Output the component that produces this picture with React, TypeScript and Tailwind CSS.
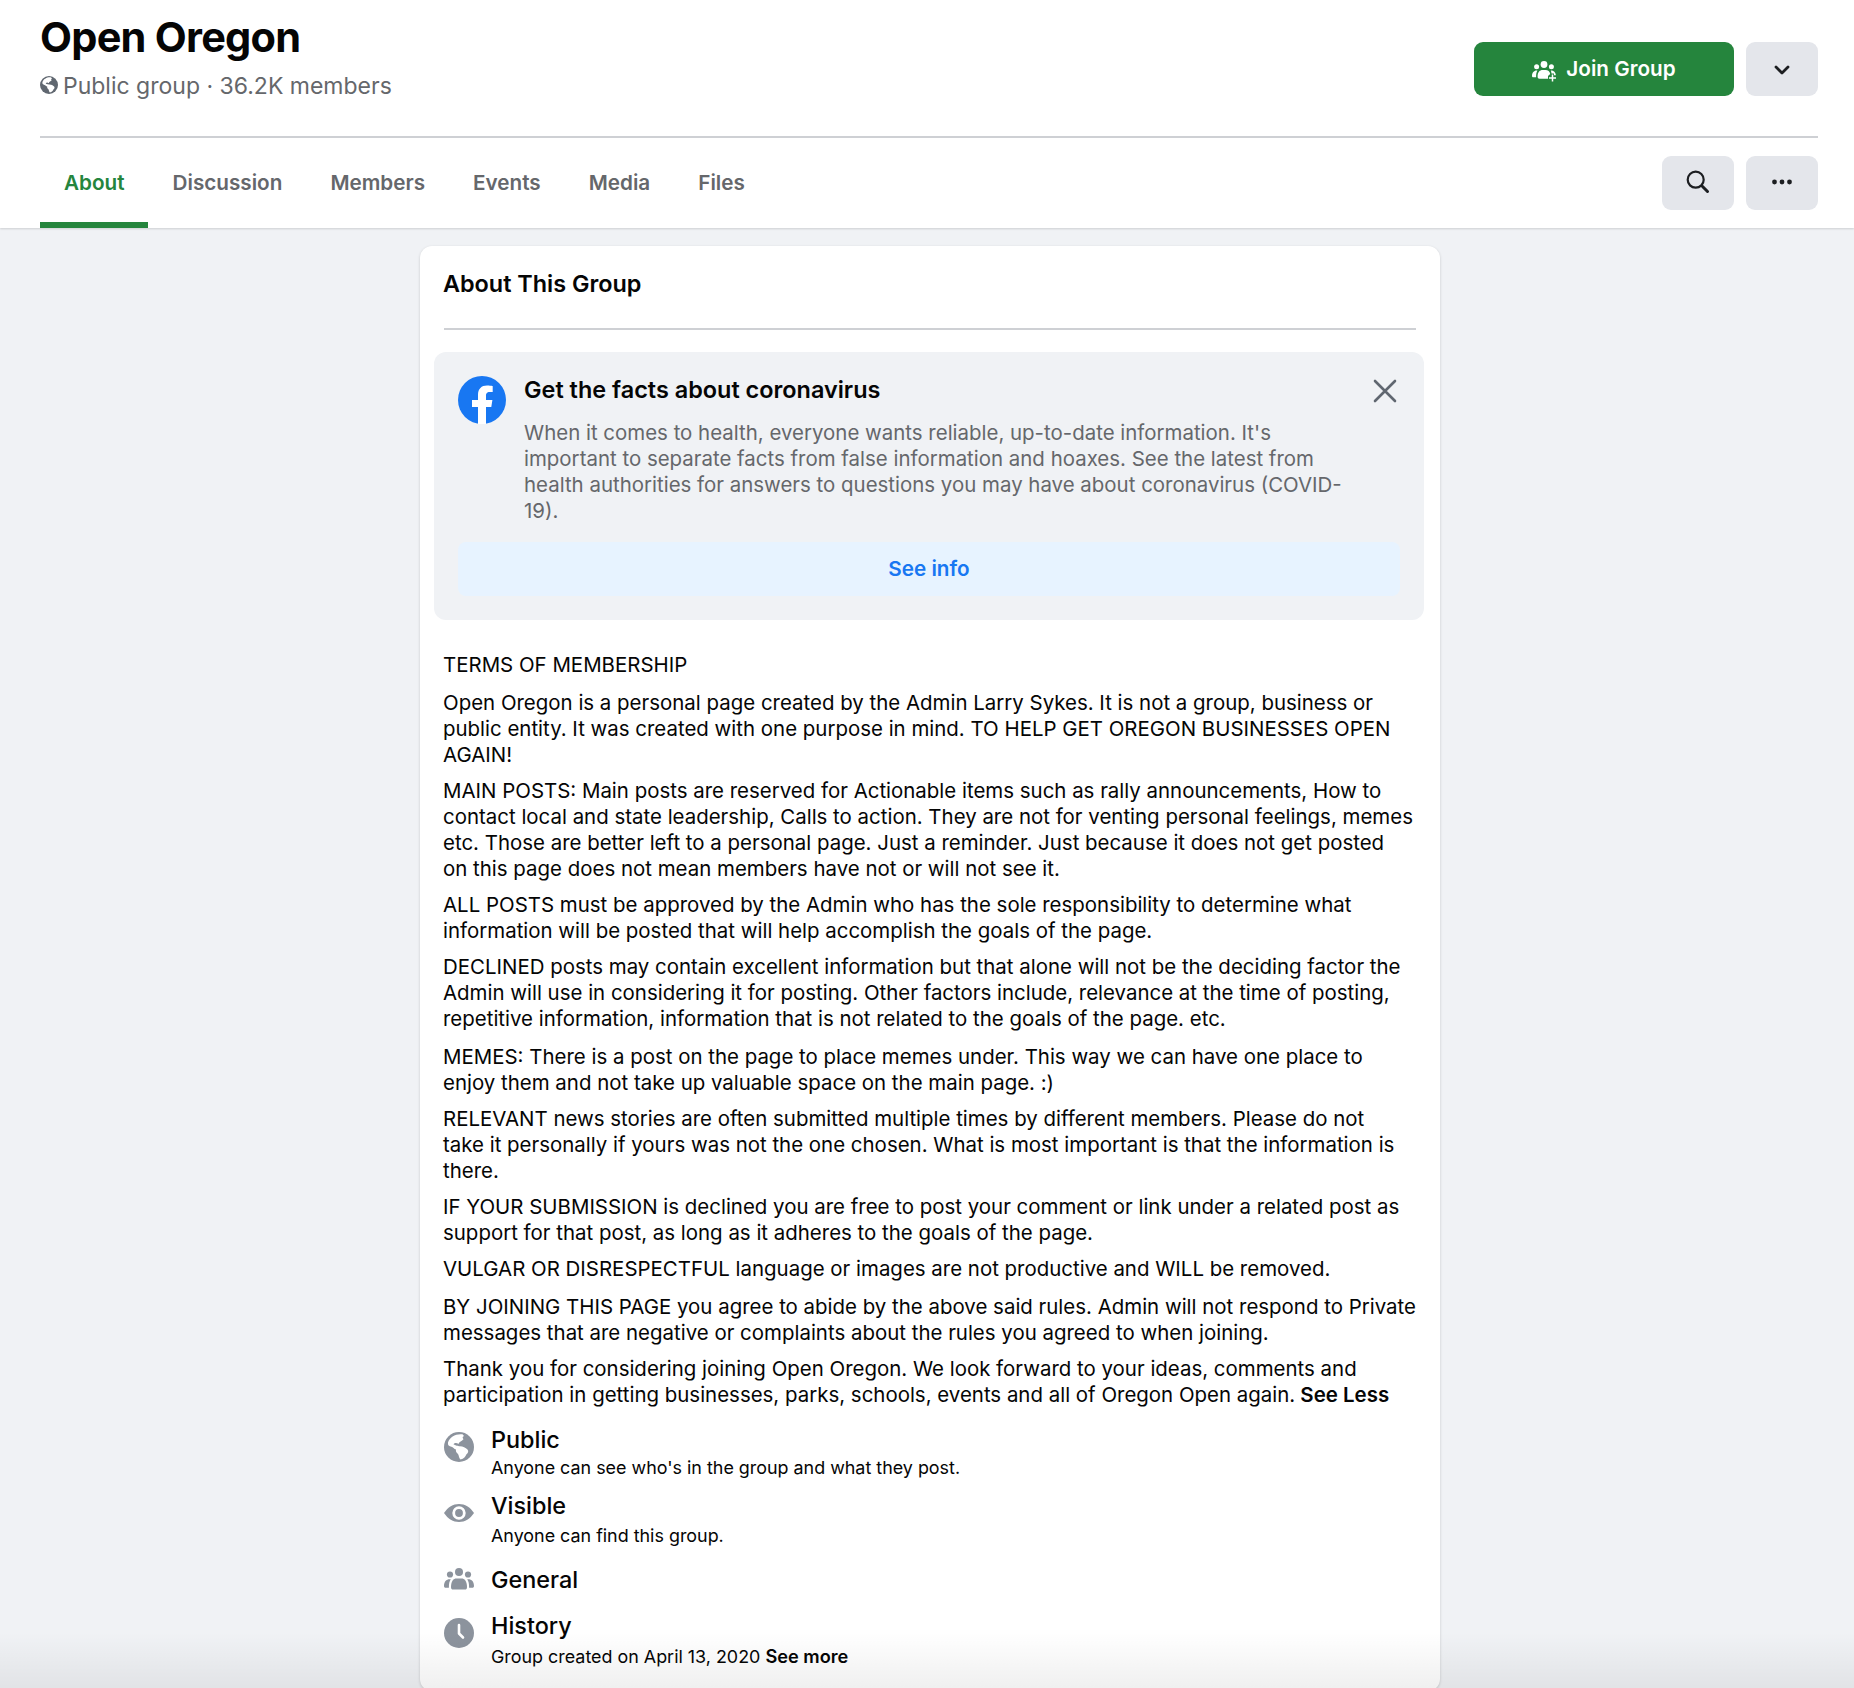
import React from "react";

const tabs = ["About", "Discussion", "Members", "Events", "Media", "Files"];

const terms = [
  { gap: "mt-0", lines: ["TERMS OF MEMBERSHIP"] },
  {
    gap: "mt-3",
    lines: [
      "Open Oregon is a personal page created by the Admin Larry Sykes. It is not a group, business or",
      "public entity. It was created with one purpose in mind. TO HELP GET OREGON BUSINESSES OPEN",
      "AGAIN!",
    ],
  },
  {
    gap: "mt-2.5",
    lines: [
      "MAIN POSTS: Main posts are reserved for Actionable items such as rally announcements, How to",
      "contact local and state leadership, Calls to action. They are not for venting personal feelings, memes",
      "etc. Those are better left to a personal page. Just a reminder. Just because it does not get posted",
      "on this page does not mean members have not or will not see it.",
    ],
  },
  {
    gap: "mt-2.5",
    lines: [
      "ALL POSTS must be approved by the Admin who has the sole responsibility to determine what",
      "information will be posted that will help accomplish the goals of the page.",
    ],
  },
  {
    gap: "mt-2.5",
    lines: [
      "DECLINED posts may contain excellent information but that alone will not be the deciding factor the",
      "Admin will use in considering it for posting. Other factors include, relevance at the time of posting,",
      "repetitive information, information that is not related to the goals of the page. etc.",
    ],
  },
  {
    gap: "mt-3",
    lines: [
      "MEMES: There is a post on the page to place memes under. This way we can have one place to",
      "enjoy them and not take up valuable space on the main page. :)",
    ],
  },
  {
    gap: "mt-2.5",
    lines: [
      "RELEVANT news stories are often submitted multiple times by different members. Please do not",
      "take it personally if yours was not the one chosen. What is most important is that the information is",
      "there.",
    ],
  },
  {
    gap: "mt-2.5",
    lines: [
      "IF YOUR SUBMISSION is declined you are free to post your comment or link under a related post as",
      "support for that post, as long as it adheres to the goals of the page.",
    ],
  },
  {
    gap: "mt-2.5",
    lines: ["VULGAR OR DISRESPECTFUL language or images are not productive and WILL be removed."],
  },
  {
    gap: "mt-3",
    lines: [
      "BY JOINING THIS PAGE you agree to abide by the above said rules. Admin will not respond to Private",
      "messages that are negative or complaints about the rules you agreed to when joining.",
    ],
  },
  {
    gap: "mt-2.5",
    lines: [
      "Thank you for considering joining Open Oregon. We look forward to your ideas, comments and",
      "participation in getting businesses, parks, schools, events and all of Oregon Open again.",
    ],
  },
];

function Globe({ className }: { className: string }) {
  return (
    <svg viewBox="0 0 30 30" className={className}>
      <circle cx="15" cy="15" r="15" fill="currentColor" />
      <path
        fill="#fff"
        d="M18.500 2.300 C12 1.500 5.500 5 4 10.500 C3.500 13 5 14.500 7.500 14.800 C9 15.300 10 17 12 17.500 C11.500 19 12.500 21 14 22 C15 23.500 14.800 25.800 16.500 27.500 C20 27 21.500 24.500 22.300 22.500 C24.300 21 24.800 19 23.500 17.500 C21.500 16 19 14.300 16 14.300 C14.500 14.300 14 13.800 13 13.800 C11.500 13.500 10.500 12.800 9.500 12.300 C10.500 10.500 13 10.500 14.500 12 C15 9.500 18 9 19.500 7.200 C18.500 6 18 5 20 4 Z"
      />
    </svg>
  );
}

function People({ className }: { className: string }) {
  return (
    <svg viewBox="0 0 30 22" className={className} fill="currentColor">
      <circle cx="15" cy="4" r="4" />
      <circle cx="6" cy="6.500" r="3.100" />
      <circle cx="24" cy="6.500" r="3.100" />
      <path d="M7 19 C7 13 9.500 10.500 12.500 10.500 H17.500 C20.500 10.500 23 13 23 19 C23 21 22.200 21.500 21 21.500 H9 C7.800 21.500 7 21 7 19 Z" />
      <path d="M6.800 11.300 C2.500 10.800 0 13.500 0 18 C0 19.200 .6 19.800 1.800 19.800 H4.900 C4.900 16 5.300 13.300 6.800 11.300 Z" />
      <path d="M23.200 11.300 C27.500 10.800 30 13.500 30 18 C30 19.200 29.400 19.800 28.200 19.800 H25.100 C25.100 16 24.700 13.300 23.200 11.300 Z" />
    </svg>
  );
}

function PeoplePlus() {
  return (
    <svg viewBox="0 0 24 21" className="mt-1 h-[21px] w-6" fill="#fff">
      <circle cx="12" cy="3.500" r="3.400" />
      <circle cx="4.600" cy="5.800" r="2.500" />
      <circle cx="19.400" cy="5.800" r="2.500" />
      <path d="M5.600 15.500 C5.600 11 8 9 10.500 9 H13.500 C16 9 17.800 10.300 18.200 13 L16 15 V17.700 H7.500 C6.200 17.700 5.600 17 5.600 15.500 Z" />
      <path d="M5 9.600 C2 9.400 0 11.800 0 15 C0 16 .5 16.300 1.400 16.300 H4.100 C4.100 13.500 4.300 11.500 5.400 9.600 Z" />
      <path d="M18.800 9.600 C21.500 9.400 23.600 11.500 23.900 14.300 H22 V12.600 H19.500 C19.400 11.500 19.200 10.700 18.800 9.600 Z" />
      <path d="M20.500 13.500 V20.500 M17 17 H24" stroke="#fff" strokeWidth="1.500" />
    </svg>
  );
}

function InfoRow({
  icon,
  title,
  className,
  children,
}: {
  icon: React.ReactNode;
  title: string;
  className: string;
  children?: React.ReactNode;
}) {
  return (
    <div className={className}>
      <div className="w-[30px] shrink-0">{icon}</div>
      <div className="whitespace-nowrap">
        <h3 className="text-[23.4px] leading-[30px] font-medium">{title}</h3>
        {children}
      </div>
    </div>
  );
}

function Header() {
  return (
    <header className="relative h-[228px] bg-white pr-9 pl-10 shadow-[0_1px_2px_rgba(0,0,0,0.15)]">
      <div className="flex h-[138px] justify-between border-b-2 border-[#ced0d4]">
        <div className="pt-[13px] whitespace-nowrap">
          <h1 className="text-[41.5px] leading-[48px] font-bold tracking-[-0.75px]">Open Oregon</h1>
          <div className="mt-[9px] flex items-center gap-[5px] text-[#65676b]">
            <Globe className="-mt-0.5 size-[18px] text-[#606770]" />
            <span className="text-[23px] leading-8">Public group · 36.2K members</span>
          </div>
        </div>
        <div className="flex gap-3 pt-[42px]">
          <button className="flex h-[54px] w-[260px] items-center justify-center gap-2.5 rounded-[9px] bg-[#25853d] text-white">
            <PeoplePlus />
            <span className="text-[20.7px] font-semibold">Join Group</span>
          </button>
          <button className="flex h-[54px] w-[72px] items-center justify-center rounded-[9px] bg-[#e4e6eb]">
            <svg viewBox="0 0 16 10" className="mt-px h-2.5 w-4" fill="none" stroke="#1c1e21" strokeWidth="2.800" strokeLinecap="round" strokeLinejoin="round">
              <path d="M2 2 L8 8 L14 2" />
            </svg>
          </button>
        </div>
      </div>
      <div className="flex h-[90px] justify-between">
        <nav className="flex text-[20.7px] font-semibold text-[#65676b]">
          {tabs.map((tab, i) => (
            <a
              key={tab}
              className={
                i === 0
                  ? "mr-px flex h-[90px] items-center rounded-t-[2px] border-b-[6px] border-[#25853d] pt-[5px] pr-[23px] pl-6 text-[#25853d]"
                  : "flex h-[90px] items-center border-b-[6px] border-transparent px-6 pt-[5px]"
              }
            >
              {tab}
            </a>
          ))}
        </nav>
        <div className="flex gap-3 pt-[18px]">
          <button className="flex h-[54px] w-[72px] items-center justify-center rounded-[9px] bg-[#e4e6eb] pb-0.5">
            <svg viewBox="0 0 24 24" className="size-6" fill="none" stroke="#1c1e21" strokeLinecap="round">
              <circle cx="9.700" cy="9.700" r="8" strokeWidth="2.200" />
              <path d="M16.300 16.300 L21.500 21.500" strokeWidth="3" />
            </svg>
          </button>
          <button className="flex h-[54px] w-[72px] items-center justify-center rounded-[9px] bg-[#e4e6eb] pb-0.5">
            <svg viewBox="0 0 20 6" className="h-1.5 w-5" fill="#1c1e21">
              <circle cx="2.500" cy="3" r="2.400" />
              <circle cx="10" cy="3" r="2.400" />
              <circle cx="17.500" cy="3" r="2.400" />
            </svg>
          </button>
        </div>
      </div>
    </header>
  );
}

function CovidNotice() {
  return (
    <div className="mt-[22px] -mr-2 -ml-2.5 h-[268px] rounded-xl bg-[#f0f2f5] px-6 pt-6">
      <div className="flex">
        <svg viewBox="0 0 48 48" className="size-12 shrink-0">
          <circle cx="24" cy="24" r="24" fill="#1877f2" />
          <path fill="#fff" d="M20 48 V30.900 H14 V24 H20 V18.800 C20 12.800 23.500 9.500 29 9.500 C31.500 9.500 34.700 10 34.700 10 V16 H31.700 C28.700 16 28 17.800 28 19.700 V24 H34.400 L33.300 30.900 H28 V48 Z" />
        </svg>
        <div className="ml-[18px] grow whitespace-nowrap">
          <h3 className="-mt-px text-[23.45px] leading-[30px] font-semibold">Get the facts about coronavirus</h3>
          <div className="mt-[15px] text-[20.46px] leading-[26px] text-[#65676b]">
            <p>When it comes to health, everyone wants reliable, up-to-date information. It's</p>
            <p>important to separate facts from false information and hoaxes. See the latest from</p>
            <p>health authorities for answers to questions you may have about coronavirus (COVID-</p>
            <p>19).</p>
          </div>
        </div>
        <svg viewBox="0 0 24 24" className="mt-[3px] mr-[3px] size-6 shrink-0" stroke="#606770" strokeWidth="2.600" strokeLinecap="round">
          <path d="M2 2 L22 22 M22 2 L2 22" />
        </svg>
      </div>
      <button className="mt-[18px] flex h-[54px] w-full items-center justify-center rounded-lg bg-[#e7f3ff] text-[20.7px] font-semibold text-[#1877f2]">
        See info
      </button>
    </div>
  );
}

export default function App() {
  return (
    <div className="relative h-[1688px] overflow-hidden bg-[#f0f2f5] font-['Inter',sans-serif] text-[#050505]">
      <Header />
      <main className="mt-[18px] ml-[420px] h-[1445px] w-[1020px] rounded-xl bg-white px-6 shadow-[0_1px_3px_rgba(0,0,0,0.17)]">
        <div className="h-[84px] border-b-2 border-[#ced0d4] pt-[23px]">
          <h2 className="-ml-px text-[23.4px] leading-[30px] font-semibold">About This Group</h2>
        </div>
        <CovidNotice />
        <div className="mt-8 -ml-px text-[20.47px] leading-[26px] whitespace-nowrap">
          {terms.map((term, i) => (
            <div key={i} className={term.gap}>
              {term.lines.map((line, j) => (
                <p key={line}>
                  {line}
                  {i === terms.length - 1 && j === 1 && <b className="font-semibold"> See Less</b>}
                </p>
              ))}
            </div>
          ))}
        </div>
        <div className="mt-[17px] flex flex-col text-[17.9px] leading-6">
          <InfoRow
            className="flex h-[66px] gap-[17px]"
            icon={<Globe className="mt-[7px] size-[30px] text-[#8c939d]" />}
            title="Public"
          >
            <p className="mt-px">Anyone can see who's in the group and what they post.</p>
          </InfoRow>
          <InfoRow
            className="flex h-[74px] gap-[17px]"
            icon={
              <svg viewBox="0 0 30 18" className="mt-[13px] h-[18px] w-[30px]">
                <path fill="#8c939d" d="M0 9 C4 3 9 0 15 0 S26 3 30 9 C26 15 21 18 15 18 S4 15 0 9 Z" />
                <circle cx="15" cy="9" r="5.300" fill="#8c939d" stroke="#fff" strokeWidth="2.800" />
              </svg>
            }
            title="Visible"
          >
            <p className="mt-[3px]">Anyone can find this group.</p>
          </InfoRow>
          <InfoRow
            className="flex h-[46px] gap-[17px]"
            icon={<People className="mt-[3px] h-[22px] w-[30px] text-[#8c939d]" />}
            title="General"
          />
          <InfoRow
            className="flex gap-[17px]"
            icon={
              <svg viewBox="0 0 30 30" className="mt-[7px] size-[30px]">
                <circle cx="15" cy="15" r="15" fill="#8c939d" />
                <path d="M15 7 V15.500 L19 19.500" fill="none" stroke="#fff" strokeWidth="2.600" strokeLinecap="round" strokeLinejoin="round" />
              </svg>
            }
            title="History"
          >
            <p className="mt-[3px]">
              Group created on April 13, 2020 <b className="text-[18.2px] font-semibold">See more</b>
            </p>
          </InfoRow>
        </div>
      </main>
      <div className="absolute inset-x-0 bottom-0 h-14 bg-linear-to-b from-transparent to-black/6" />
    </div>
  );
}
